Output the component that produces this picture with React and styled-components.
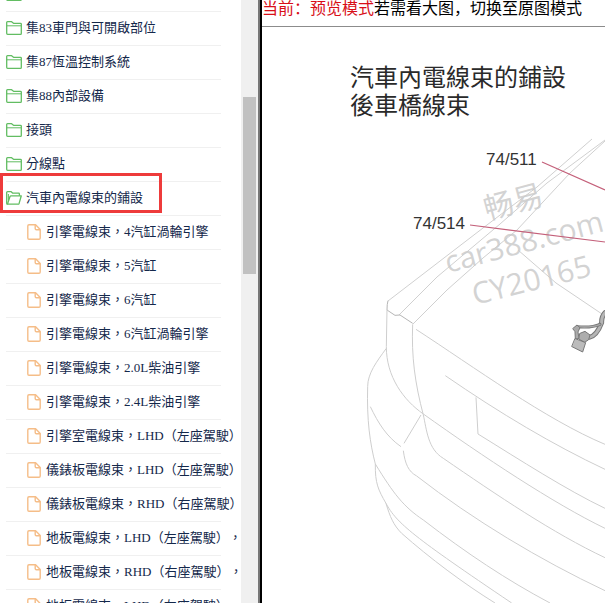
import React from 'react';
import styled, { createGlobalStyle } from 'styled-components';

const GlobalStyle = createGlobalStyle`
  * { box-sizing: border-box; }
  body { margin: 0; background: #fff; }
`;

const Page = styled.div`
  display: flex;
  height: 100vh;
  overflow: hidden;
`;

const Sidebar = styled.nav`
  display: flex;
  flex: none;
  width: 262px;
  border-right: 2px solid #000;
`;

const TreeView = styled.div`
  flex: 1;
  min-width: 0;
  overflow: hidden;
`;

const Tree = styled.ul`
  list-style: none;
  margin: -22px 20px 0 6px;
  padding: 0;
`;

const Row = styled.li`
  position: relative;
  height: 34px;
  padding-left: ${({ $nested }) => ($nested ? '20px' : '0')};
  border-bottom: 1px solid #f0f0f0;
`;

const RowLink = styled.a`
  display: flex;
  align-items: center;
  gap: 4px;
  height: 100%;
  padding-bottom: 2px;
  color: #14284b;
  font: 13px/20px 'Liberation Serif', 'Noto Sans CJK TC', serif;
  text-decoration: none;
  text-spacing-trim: space-all;
  white-space: nowrap;

  svg { flex: none; margin-top: 1px; }
`;

const Highlight = styled.span`
  position: absolute;
  top: -9px;
  left: -6px;
  width: 162px;
  height: 40px;
  border: 3px solid #ee3b3b;
  pointer-events: none;
`;

const ScrollTrack = styled.div`
  display: grid;
  grid-template-rows: 97fr 177fr 329fr;
  width: 19px;
  padding: 0 2px;
  background: #f0f0f0;
  border-right: 2px solid #777;
`;

const ScrollThumb = styled.div`
  grid-row: 2;
  background: #c1c1c1;
`;

const Viewer = styled.main`
  flex: 1;
  min-width: 0;
  overflow: hidden;
`;

const ModeBar = styled.p`
  height: 27px;
  margin: 0;
  border-bottom: 1px solid #8c8c8c;
  color: #000;
  font: 16px/14px 'Noto Sans CJK SC', sans-serif;
  white-space: nowrap;
`;

const CurrentMode = styled.span`
  color: #d80f18;
`;

const Drawing = styled.svg`
  display: block;
`;

const DrawingTitle = styled.text`
  fill: #2a2a2a;
  font: 24px 'Noto Sans CJK TC', sans-serif;
`;

const PartLabel = styled.text`
  fill: #333;
  font: 17px 'Liberation Sans', sans-serif;
`;

const Watermark = styled.text`
  fill: #cbcbcb;
  fill-opacity: 0.85;
  font: 30px 'Open Sans', 'Noto Sans CJK SC', sans-serif;
`;

const FolderIcon = () => (
  <svg width="16" height="14" viewBox="0 0 16 14" fill="none" stroke="#62bd62" strokeWidth="1.3" strokeLinejoin="round" aria-hidden="true">
    <path d="M.7 12.2V1.5Q.7.7 1.5.7H5.6L7.5 2.3H14.5Q15.3 2.3 15.3 3.1V12.4Q15.3 13.3 14.5 13.3H1.6Q.7 13.3.7 12.2Z" />
    <path d="M.7 4.8H15.3" strokeWidth="1" />
  </svg>
);

const OpenFolderIcon = () => (
  <svg width="16" height="14" viewBox="0 0 16 14" fill="none" stroke="#62bd62" strokeWidth="1.3" strokeLinejoin="round" aria-hidden="true">
    <path d="M1.6 13.2Q.7 13.2.7 12.2V1.5Q.7.7 1.5.7H5.2L6.8 2.2H12.6Q13.4 2.2 13.4 3V4.8" />
    <path d="M1.4 13.2L4 5.5Q4.3 4.8 5 4.8H15.3L13.1 12.4Q12.8 13.2 12 13.2Z" />
    <path d="M2.4 3V9" strokeWidth="1" />
  </svg>
);

const FileIcon = () => (
  <svg width="16" height="16" viewBox="0 0 16 16" fill="none" stroke="#f5bd88" strokeWidth="1.4" strokeLinejoin="round" aria-hidden="true">
    <path d="M9.6.8H3Q1.8.8 1.8 2V14Q1.8 15.2 3 15.2H13Q14.2 15.2 14.2 14V5.5Z" />
    <path d="M9.2.8V4.6Q9.2 5.8 10.4 5.8H14.2" />
  </svg>
);

const icons = { folder: FolderIcon, open: OpenFolderIcon, file: FileIcon };

const entries = [
  { kind: 'folder', name: '' },
  { kind: 'folder', name: '集83車門與可開啟部位' },
  { kind: 'folder', name: '集87恆溫控制系統' },
  { kind: 'folder', name: '集88內部設備' },
  { kind: 'folder', name: '接頭' },
  { kind: 'folder', name: '分線點' },
  { kind: 'open', name: '汽車內電線束的鋪設', marked: true },
  { kind: 'file', name: '引擎電線束，4汽缸渦輪引擎' },
  { kind: 'file', name: '引擎電線束，5汽缸' },
  { kind: 'file', name: '引擎電線束，6汽缸' },
  { kind: 'file', name: '引擎電線束，6汽缸渦輪引擎' },
  { kind: 'file', name: '引擎電線束，2.0L柴油引擎' },
  { kind: 'file', name: '引擎電線束，2.4L柴油引擎' },
  { kind: 'file', name: '引擎室電線束，LHD（左座駕駛）' },
  { kind: 'file', name: '儀錶板電線束，LHD（左座駕駛）' },
  { kind: 'file', name: '儀錶板電線束，RHD（右座駕駛）' },
  { kind: 'file', name: '地板電線束，LHD（左座駕駛），' },
  { kind: 'file', name: '地板電線束，RHD（右座駕駛），' },
  { kind: 'file', name: '地板電線束，LHD（左座駕駛），' },
];

function TreeRow({ kind, name, marked }) {
  const Icon = icons[kind];
  return (
    <Row $nested={kind === 'file'}>
      <RowLink href="#">
        <Icon />
        {name}
      </RowLink>
      {marked && <Highlight />}
    </Row>
  );
}

function WiringDrawing() {
  return (
    <Drawing width="343" height="576" viewBox="262 27 343 576" role="img" aria-label="汽車內電線束的鋪設 後車橋線束">
      <g fill="none" stroke="#d0d0d0" strokeWidth="1">
        <path d="M388 301L483 228L537 187L592 139" />
        <path d="M399 315L437 277L500 224L547 183L605 140" />
        <path d="M413 324L447 290L483 258L517 230L543 202L570 173L605 141" />
        <path d="M518 250L556 283L602 314" />
      </g>
      <g transform="translate(340 290) scale(.33333)" fill="none" stroke="#cecece" strokeWidth="3">
        <path d="M144 32Q141 42 141 60L165 76L180 75L218 100" stroke="#b5b5b5" />
        <path d="M141 60L139 170C139 260 190 330 250 372C430 500 640 640 795 715" />
        <path d="M218 103C214 200 225 280 250 375C260 420 264 478 310 505C470 615 640 730 795 803" />
        <path d="M228 118C400 230 620 390 795 463" />
        <path d="M316 257C480 370 640 465 795 538" />
        <path d="M408 322L414 432C540 510 680 600 795 655" />
        <path d="M139 175C110 215 83 250 83 290C80 390 90 460 106 522C105 580 115 600 138 640C150 680 160 705 185 730C270 805 370 880 465 939" />
        <path d="M91 350C115 400 140 440 183 470M243 375L192 460M190 482C195 520 205 545 230 558C400 690 600 810 795 902" />
        <path d="M106 522C160 610 190 650 250 690C380 790 500 870 630 939" />
        <path d="M138 640C170 700 220 740 515 939" />
      </g>
      <g transform="translate(340 290) scale(.33333)" strokeLinecap="round" strokeLinejoin="round">
        <path d="M795 68Q784 80 785 98Q770 138 748 142" fill="none" stroke="#777" strokeWidth="15" />
        <path d="M795 68Q784 80 785 98Q770 138 748 142" fill="none" stroke="#b5b5b5" strokeWidth="9" />
        <path d="M780 103Q755 114 712 110" fill="none" stroke="#777" strokeWidth="9" />
        <path d="M780 103Q755 114 712 110" fill="none" stroke="#aaa" strokeWidth="4" />
        <path d="M699 115L711 105L720 113L714 126L717 145L706 147L705 126Z" fill="#aaa" stroke="#777" strokeWidth="3" />
        <path d="M720 130L735 124L750 135L746 149L734 157L718 148Z" fill="#adadad" stroke="#777" strokeWidth="3" />
        <path d="M706 146L737 158L728 186L696 170Z" fill="#bbb" stroke="#777" strokeWidth="3" />
      </g>
      <Watermark transform="translate(487 220) rotate(-15)">畅易</Watermark>
      <Watermark transform="translate(448 273) rotate(-15)">car388.com</Watermark>
      <Watermark transform="translate(475 305) rotate(-14)">CY20165</Watermark>
      <path d="M542 162L605 190M470 225L605 242" fill="none" stroke="#c4607a" strokeWidth="1.2" />
      <PartLabel x="486" y="165">74/511</PartLabel>
      <PartLabel x="413" y="229">74/514</PartLabel>
      <DrawingTitle x="350" y="86">汽車內電線束的鋪設</DrawingTitle>
      <DrawingTitle x="350" y="114">後車橋線束</DrawingTitle>
    </Drawing>
  );
}

export default function App() {
  return (
    <Page>
      <GlobalStyle />
      <Sidebar>
        <TreeView>
          <Tree>
            {entries.map((entry, index) => (
              <TreeRow key={index} {...entry} />
            ))}
          </Tree>
        </TreeView>
        <ScrollTrack>
          <ScrollThumb />
        </ScrollTrack>
      </Sidebar>
      <Viewer>
        <ModeBar>
          <CurrentMode>当前：预览模式</CurrentMode>若需看大图，切换至原图模式
        </ModeBar>
        <WiringDrawing />
      </Viewer>
    </Page>
  );
}
